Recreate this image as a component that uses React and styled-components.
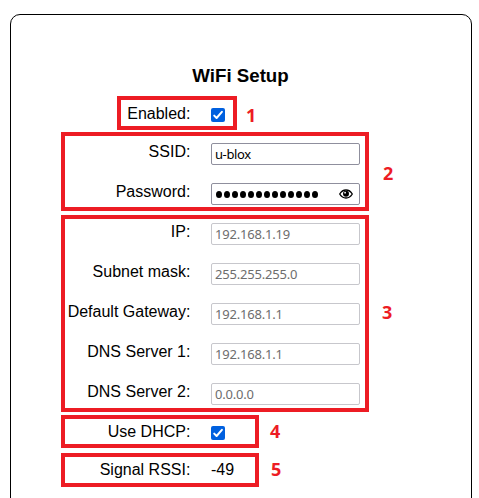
import React from "react";
import styled, { createGlobalStyle } from "styled-components";

const GlobalStyle = createGlobalStyle`
  body {
    margin: 0;
    background: #fff;
    color: #000;
    font: 16px/18px "Liberation Sans", Arial, sans-serif;
    overflow: hidden;
  }
`;

const Page = styled.main`
  box-sizing: border-box;
  height: 498px;
  padding: 14px 7px 0 10px;
  overflow: hidden;
`;

const Card = styled.section`
  box-sizing: border-box;
  height: 520px;
  padding: 50px 0 0 50px;
  border: 1px solid #000;
  border-radius: 10px;
`;

const Title = styled.h3`
  width: 359px;
  margin: 0 0 9px;
  font-size: 18.72px;
  line-height: 22px;
  text-align: center;
`;

const Group = styled.div`
  position: relative;
  box-sizing: border-box;
  width: ${(p) => p.$width}px;
  height: ${(p) => p.$height}px;
  margin: 0 0 ${(p) => p.$after || 0}px ${(p) => p.$indent || 0}px;
  padding-top: ${(p) => p.$top}px;
  border: 4px solid #ed1c24;
`;

const Row = styled.div`
  display: grid;
  grid-template-columns: ${(p) => 125.4 - (p.$indent || 0)}px 149px;
  column-gap: 20.6px;
  align-items: start;
  height: 40px;
`;

const Label = styled.label`
  padding-top: 1px;
  text-align: right;
  white-space: nowrap;
`;

const Value = styled.span`
  padding-top: 1px;
`;

const Field = styled.div`
  display: flex;
  align-items: center;
  justify-content: space-between;
  box-sizing: border-box;
  height: 22px;
  margin-top: 1px;
  padding: 0 6px 1px 3px;
  border: 1px solid ${(p) => (p.$disabled ? "#c7c7cc" : "#8f8f9d")};
  border-radius: 2px;
  color: ${(p) => (p.$disabled ? "#6d6d6d" : "#000")};
  font: 13px/18px "Noto Sans", sans-serif;
  letter-spacing: ${(p) => (p.$disabled ? "-0.2px" : "-0.4px")};
`;

const Dots = styled.span`
  display: flex;
  gap: 2px;
  padding: 2px 0 0 1px;
`;

const Dot = styled.i`
  width: 6px;
  height: 7px;
  border-radius: 50%;
  background: #000;
`;

const Check = styled.span`
  display: block;
  width: 14px;
  height: 14px;
  margin-top: 4px;
  border-radius: 2px;
  background: #0060df;

  svg {
    display: block;
  }
`;

const Callout = styled.b`
  position: absolute;
  left: ${(p) => p.$x}px;
  top: ${(p) => p.$y}px;
  color: #ed1c24;
  font: 700 18px/20px "Open Sans", sans-serif;
`;

const Checkbox = () => (
  <Check role="checkbox" aria-checked="true">
    <svg width="14" height="14" viewBox="0 0 14 14" fill="none" stroke="#fff" strokeWidth="2" strokeLinecap="round" strokeLinejoin="round">
      <path d="M3.2 7.6 5.6 10 10.9 3.8" />
    </svg>
  </Check>
);

const EyeIcon = styled.svg`
  margin-top: 1px;
`;

const Eye = () => (
  <EyeIcon width="14" height="10" viewBox="0 0 14 10">
    <path d="M.7 5C2.3 2.3 4.5 1 7 1s4.7 1.3 6.3 4C11.7 7.7 9.5 9 7 9S2.3 7.7.7 5Z" fill="#fff" stroke="#000" strokeWidth="1.3" />
    <circle cx="7" cy="4.7" r="3" />
    <circle cx="6.1" cy="3.7" r=".9" fill="#fff" />
  </EyeIcon>
);

const network = [
  ["IP:", "192.168.1.19"],
  ["Subnet mask:", "255.255.255.0"],
  ["Default Gateway:", "192.168.1.1"],
  ["DNS Server 1:", "192.168.1.1"],
  ["DNS Server 2:", "0.0.0.0"],
];

export default function App() {
  return (
    <Page>
      <GlobalStyle />
      <Card>
        <Title>WiFi Setup</Title>
        <Group $width={120} $height={34} $indent={56} $after={2} $top={4}>
          <Row $indent={56}>
            <Label>Enabled:</Label>
            <Checkbox />
          </Row>
          <Callout $x={125} $y={5}>1</Callout>
        </Group>
        <Group $width={308} $height={79} $after={4} $top={6}>
          <Row>
            <Label>SSID:</Label>
            <Field>u-blox</Field>
          </Row>
          <Row>
            <Label>Password:</Label>
            <Field>
              <Dots>
                {Array.from({ length: 13 }, (_, i) => <Dot key={i} />)}
              </Dots>
              <Eye />
            </Field>
          </Row>
          <Callout $x={318} $y={27}>2</Callout>
        </Group>
        <Group $width={308} $height={197} $after={3} $top={3}>
          {network.map(([label, value]) => (
            <Row key={label}>
              <Label>{label}</Label>
              <Field $disabled>{value}</Field>
            </Row>
          ))}
          <Callout $x={317} $y={83}>3</Callout>
        </Group>
        <Group $width={198} $height={33} $after={5} $top={3}>
          <Row>
            <Label>Use DHCP:</Label>
            <Checkbox />
          </Row>
          <Callout $x={205} $y={2}>4</Callout>
        </Group>
        <Group $width={198} $height={34} $top={3}>
          <Row>
            <Label>Signal RSSI:</Label>
            <Value>-49</Value>
          </Row>
          <Callout $x={206} $y={2}>5</Callout>
        </Group>
      </Card>
    </Page>
  );
}
